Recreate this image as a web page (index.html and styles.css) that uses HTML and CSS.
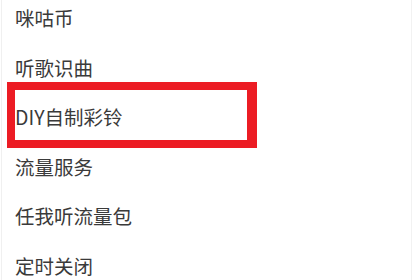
FILE: index.html
```html
<!DOCTYPE html>
<html lang="zh-CN">
<head>
<meta charset="utf-8">
<link rel="stylesheet" href="styles.css">
</head>
<body>
<div class="page">
  <ul class="menu">
    <li class="item">咪咕币</li>
    <li class="item">听歌识曲</li>
    <li class="item item-marked"><span class="mark"></span>DIY自制彩铃</li>
    <li class="item">流量服务</li>
    <li class="item">任我听流量包</li>
    <li class="item">定时关闭</li>
  </ul>
</div>
</body>
</html>
```

FILE: styles.css
```css
html, body {
  margin: 0;
  padding: 0;
  background: #ffffff;
}

.page {
  width: 420px;
  height: 280px;
  overflow: hidden;
  box-sizing: border-box;
  border-left: 1px solid #f0f0f0;
  margin-left: 1px;
}

.menu {
  list-style: none;
  margin: -7.25px 0 0 0;
  padding: 0;
  width: 409px;
  border-right: 1px solid #f2f2f2;
}

.item {
  position: relative;
  height: 49.5px;
  display: flex;
  align-items: center;
  padding-left: 13px;
  font-family: "Noto Sans CJK SC", "Noto Sans", sans-serif;
  font-size: 19.5px;
  color: #3a3a3a;
}

.mark {
  position: absolute;
  left: 5px;
  top: -10px;
  width: 250px;
  height: 66px;
  box-sizing: border-box;
  border: 8px solid #ec1c24;
  border-right-width: 10px;
}
```
